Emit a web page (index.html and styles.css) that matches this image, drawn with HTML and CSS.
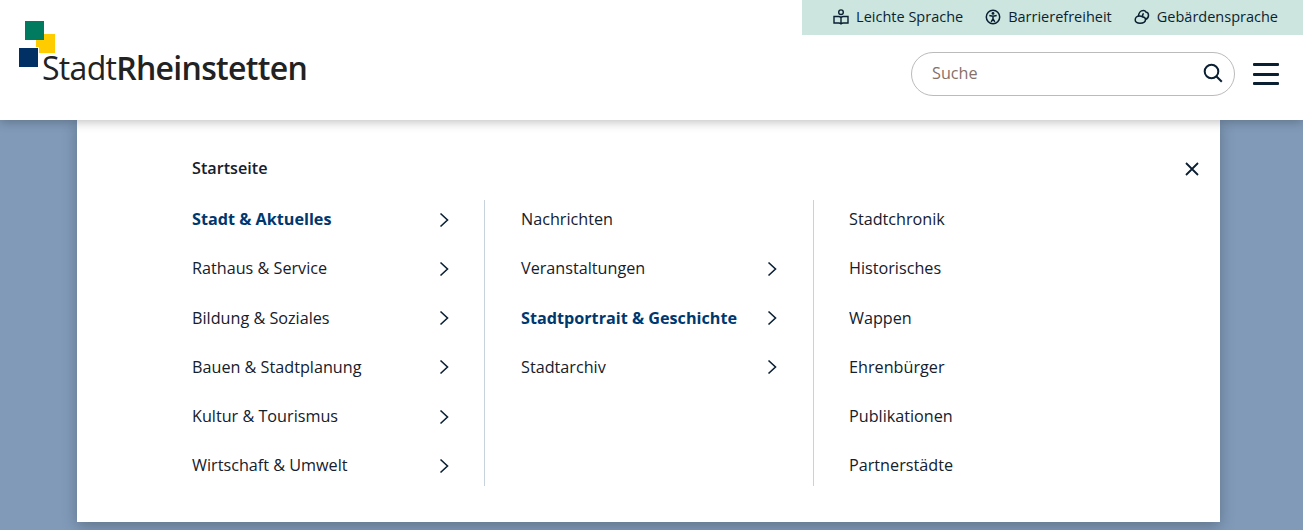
FILE: index.html
```html
<!DOCTYPE html>
<html lang="de">
<head>
    <meta charset="UTF-8">
    <meta name="viewport" content="width=device-width, initial-scale=1.0">
    <title>Stadt Rheinstetten</title>
    <link rel="stylesheet" href="styles.css">
</head>
<body>
    <header class="site-header">
        <a class="logo" href="#">
            <span class="logo-mark">
                <span class="logo-yellow"></span>
                <span class="logo-green"></span>
                <span class="logo-blue"></span>
            </span>
            <span class="logo-text">Stadt<b>Rheinstetten</b></span>
        </a>
        <div class="header-right">
            <nav class="top-links">
                <a href="#">
                    <svg class="top-icon" viewBox="0 0 16 16" fill="none" stroke="#0b1f33" stroke-width="1.400">
                        <circle cx="8" cy="3.200" r="2.300"/>
                        <path d="M1 7.500h4.500c1.200 0 2 .5 2.500 1.200.5-.7 1.300-1.200 2.500-1.200H15v6.500h-4.800c-1 0-1.800.3-2.200.8-.4-.5-1.200-.8-2.200-.8H1zM8 8.700v6"/>
                    </svg>
                    Leichte Sprache
                </a>
                <a href="#">
                    <svg class="top-icon" viewBox="0 0 16 16" fill="none" stroke="#0b1f33" stroke-width="1.500">
                        <circle cx="8" cy="8" r="6.700"/>
                        <circle cx="8" cy="4.400" r="1.400" fill="#0b1f33" stroke="none"/>
                        <path d="M4.300 6.500 8 7.300l3.700-.8M8 7.300v2.500M8 9.800l-1.800 3M8 9.800l1.800 3"/>
                    </svg>
                    Barrierefreiheit
                </a>
                <a href="#">
                    <svg class="top-icon" viewBox="0 0 16 16" fill="none" stroke="#0b1f33" stroke-width="1.500">
                        <path d="M4.500 7.500C4.500 4 6.500 1.500 9.500 1.500c1.200 0 2 .6 2.400 1.500 1.600.3 2.600 1.500 2.600 3.200 0 2-1.200 3.600-3 4.300"/>
                        <path d="M1.200 11c0-2.300 1.900-4 4.300-4 1.300 0 2.300.3 3.200 1 1.700.1 2.800 1 2.800 2.500 0 2.200-2.200 3.700-5.500 3.700-2.800 0-4.800-1.200-4.800-3.200z"/>
                        <path d="M8.700 8c-.3-1.300-.1-2.700.8-3.800"/>
                    </svg>
                    Gebärdensprache
                </a>
            </nav>
            <div class="header-tools">
                <form class="search">
                    <input class="search-input" type="text" placeholder="Suche">
                    <svg class="search-icon" viewBox="0 0 20 20" fill="none" stroke="#0b1f33" stroke-width="2">
                        <circle cx="8.500" cy="8.500" r="6.800"/>
                        <path d="m13.300 13.300 5.500 5.500"/>
                    </svg>
                </form>
                <button class="burger" type="button" aria-label="Menü">
                    <span></span>
                    <span></span>
                    <span></span>
                </button>
            </div>
        </div>
    </header>

    <main class="menu-panel">
        <div class="menu-head">
            <a class="home-link" href="#">Startseite</a>
            <svg class="close-icon" viewBox="0 0 14 14" fill="none" stroke="#0b1f33" stroke-width="1.800">
                <path d="m1 1 12 12M13 1 1 13"/>
            </svg>
        </div>
        <div class="menu-columns">
            <ul class="menu-col">
                <li class="active">Stadt &amp; Aktuelles <svg class="chev" viewBox="0 0 10 16"><path d="m1.500 1.500 7 6.500-7 6.500"/></svg></li>
                <li>Rathaus &amp; Service <svg class="chev" viewBox="0 0 10 16"><path d="m1.500 1.500 7 6.500-7 6.500"/></svg></li>
                <li>Bildung &amp; Soziales <svg class="chev" viewBox="0 0 10 16"><path d="m1.500 1.500 7 6.500-7 6.500"/></svg></li>
                <li>Bauen &amp; Stadtplanung <svg class="chev" viewBox="0 0 10 16"><path d="m1.500 1.500 7 6.500-7 6.500"/></svg></li>
                <li>Kultur &amp; Tourismus <svg class="chev" viewBox="0 0 10 16"><path d="m1.500 1.500 7 6.500-7 6.500"/></svg></li>
                <li>Wirtschaft &amp; Umwelt <svg class="chev" viewBox="0 0 10 16"><path d="m1.500 1.500 7 6.500-7 6.500"/></svg></li>
            </ul>
            <ul class="menu-col menu-col-mid">
                <li>Nachrichten</li>
                <li>Veranstaltungen <svg class="chev" viewBox="0 0 10 16"><path d="m1.500 1.500 7 6.500-7 6.500"/></svg></li>
                <li class="active">Stadtportrait &amp; Geschichte <svg class="chev" viewBox="0 0 10 16"><path d="m1.500 1.500 7 6.500-7 6.500"/></svg></li>
                <li>Stadtarchiv <svg class="chev" viewBox="0 0 10 16"><path d="m1.500 1.500 7 6.500-7 6.500"/></svg></li>
            </ul>
            <ul class="menu-col menu-col-last">
                <li>Stadtchronik</li>
                <li>Historisches</li>
                <li>Wappen</li>
                <li>Ehrenbürger</li>
                <li>Publikationen</li>
                <li>Partnerstädte</li>
            </ul>
        </div>
    </main>
</body>
</html>
```

FILE: styles.css
```css
html, body {
    height: 100%;
}
body {
    margin: 0;
    overflow: hidden;
    font-family: "Open Sans", sans-serif;
    font-size: 16.2px;
    color: #14202c;
    background-color: #809ab8;
}
a {
    color: inherit;
    text-decoration: none;
}

/* header */
.site-header {
    position: relative;
    z-index: 2;
    display: flex;
    justify-content: space-between;
    height: 120px;
    background-color: #fff;
    box-shadow: 0 2px 10px rgba(0,0,0,0.25);
}
.logo {
    display: flex;
    align-items: flex-end;
    height: 88px;
    padding-left: 19px;
    color: #222;
}
.logo-mark {
    position: relative;
    flex-shrink: 0;
    align-self: flex-start;
    width: 36px;
    height: 46px;
    margin-top: 21px;
}
.logo-mark span {
    position: absolute;
    width: 19px;
    height: 19px;
}
.logo-green {
    top: 0;
    left: 6px;
    background-color: #007b5f;
}
.logo-yellow {
    top: 13px;
    left: 17px;
    background-color: #ffcc00;
}
.logo-blue {
    top: 27px;
    left: 0;
    background-color: #003064;
    outline: 1px solid #fff;
}
.logo-text {
    margin-left: -13px;
    font-size: 32px;
    line-height: 40px;
    letter-spacing: -0.7px;
}
.logo-text b {
    font-weight: 600;
}
.header-right {
    display: flex;
    flex-direction: column;
    width: 501px;
}
.top-links {
    display: flex;
    justify-content: flex-end;
    gap: 22px;
    height: 33px;
    padding-right: 25px;
    padding-bottom: 2px;
    background-color: #cce5de;
    font-size: 14.500px;
}
.top-links a {
    display: flex;
    align-items: center;
    gap: 7px;
    color: #0b1f33;
}
.top-icon {
    width: 16px;
    height: 16px;
}
.header-tools {
    display: flex;
    align-items: center;
    justify-content: flex-end;
    padding: 17px 24px 0 0;
}
.search {
    display: flex;
    align-items: center;
    width: 324px;
    height: 44px;
    padding: 0 11px 2px 20px;
    border: 1px solid #bbb;
    border-radius: 22px;
    box-sizing: border-box;
}
.search-input {
    flex: 1;
    min-width: 0;
    padding: 0;
    border: none;
    outline: none;
    font-family: inherit;
    font-size: 16.200px;
    color: #14202c;
}
.search-input::placeholder {
    color: #85706a;
    opacity: 1;
}
.search-icon {
    width: 20px;
    height: 20px;
}
.burger {
    display: flex;
    flex-direction: column;
    gap: 6.500px;
    width: 26px;
    margin-left: 18px;
    padding: 0;
    border: none;
    background: none;
}
.burger span {
    display: block;
    height: 3px;
    border-radius: 1px;
    background-color: #0b1f33;
}

/* menu panel */
.menu-panel {
    width: 1143px;
    height: 402px;
    margin-left: 77px;
    padding: 0 21px 0 115px;
    box-sizing: border-box;
    background-color: #fff;
    box-shadow: 0 4px 14px rgba(0,0,0,0.25);
}
.menu-head {
    display: flex;
    align-items: center;
    justify-content: space-between;
    height: 80px;
    padding-top: 17px;
    box-sizing: border-box;
}
.home-link {
    font-weight: 600;
    margin-top: -2px;
}
.close-icon {
    width: 14px;
    height: 14px;
}
.menu-columns {
    display: flex;
}
.menu-col {
    display: flex;
    flex-direction: column;
    gap: 11.250px;
    width: 292px;
    height: 286px;
    margin: 0;
    padding: 0 35px 0 0;
    box-sizing: border-box;
    list-style: none;
}
.menu-col-mid {
    width: 329px;
    padding: 0 36px 0 36px;
    border-left: 1px solid #c6d2dc;
}
.menu-col-last {
    width: 329px;
    padding-left: 35px;
    border-left: 1px solid #c6d2dc;
}
.menu-col li {
    display: flex;
    align-items: center;
    justify-content: space-between;
    height: 38px;
    flex-shrink: 0;
}
.menu-col .active {
    font-weight: 700;
    color: #00386e;
}
.chev {
    width: 10px;
    height: 16px;
    margin-top: 1px;
    fill: none;
    stroke: #0b1f33;
    stroke-width: 1.600;
}
```
